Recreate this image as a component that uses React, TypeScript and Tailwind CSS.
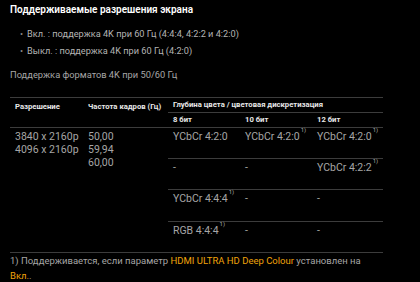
import React from "react";

const sup = <sup className="ml-[1px] text-[6px] align-[5px]">1)</sup>;

function Cell({ children, className = "" }: { children?: React.ReactNode; className?: string }) {
  return <div className={`border-b border-[#3c3c3c] pl-[5px] ${className}`}>{children}</div>;
}

export default function App() {
  const body = "pt-[2px] text-[10.5px] leading-[13px] text-[#a6a6a6]";
  const head = "flex items-center text-[7.7px] font-bold text-[#e8e8e8]";
  return (
    <div
      className="w-[420px] h-[282px] bg-black overflow-hidden px-[10px] pt-[2px]"
      style={{ fontFamily: 'Roboto, "Noto Sans", sans-serif' }}
    >
      <h1 className="text-[10px] font-semibold leading-[15px] text-white">Поддерживаемые разрешения экрана</h1>
      <ul className="mt-[10px] flex flex-col gap-[3px] pl-[10px] text-[9.2px] leading-[14px] text-[#b4b4b4]">
        <li className="flex gap-[4px]">
          <span className="text-[#8a8a8a]">•</span>
          <span>Вкл. : поддержка 4K при 60 Гц (4:4:4, 4:2:2 и 4:2:0)</span>
        </li>
        <li className="flex gap-[4px]">
          <span className="text-[#8a8a8a]">•</span>
          <span>Выкл. : поддержка 4K при 60 Гц (4:2:0)</span>
        </li>
      </ul>
      <p className="mt-[10px] text-[9.3px] leading-[14px] text-[#a6a6a6]">Поддержка форматов 4K при 50/60 Гц</p>

      <div className="mt-[15px] grid w-[373px] grid-cols-[73px_85px_72px_72px_71px] grid-rows-[15px_15px_31px_31px_32px_31px] border-t border-[#3c3c3c]">
        <Cell className={`row-span-2 ${head} items-start pt-[3px]`}>Разрешение</Cell>
        <Cell className={`row-span-2 ${head} items-start pt-[3px]`}>Частота кадров (Гц)</Cell>
        <Cell className={`col-span-3 ${head}`}>Глубина цвета / цветовая дискретизация</Cell>
        <Cell className={head}>8 бит</Cell>
        <Cell className={head}>10 бит</Cell>
        <Cell className={head}>12 бит</Cell>

        <Cell className={`row-span-4 ${body}`}>
          <div>3840 x 2160p</div>
          <div>4096 x 2160p</div>
        </Cell>
        <Cell className={`row-span-4 ${body}`}>
          <div>50,00</div>
          <div>59,94</div>
          <div>60,00</div>
        </Cell>
        <Cell className={body}>YCbCr 4:2:0</Cell>
        <Cell className={body}>YCbCr 4:2:0{sup}</Cell>
        <Cell className={body}>YCbCr 4:2:0{sup}</Cell>

        <Cell className={body}>-</Cell>
        <Cell className={body}>-</Cell>
        <Cell className={body}>YCbCr 4:2:2{sup}</Cell>

        <Cell className={body}>YCbCr 4:4:4{sup}</Cell>
        <Cell className={body}>-</Cell>
        <Cell className={body}>-</Cell>

        <Cell className={body}>RGB 4:4:4{sup}</Cell>
        <Cell className={body}>-</Cell>
        <Cell className={body}>-</Cell>
      </div>

      <p className="w-[373px] text-[9.5px] leading-[15px] text-[#a6a6a6]">
        1) Поддерживается, если параметр{" "}
        <span className="text-[#f0a30a]">HDMI ULTRA HD Deep Colour</span> установлен на{" "}
        <span className="text-[#f0a30a]">Вкл.</span>.
      </p>
    </div>
  );
}
